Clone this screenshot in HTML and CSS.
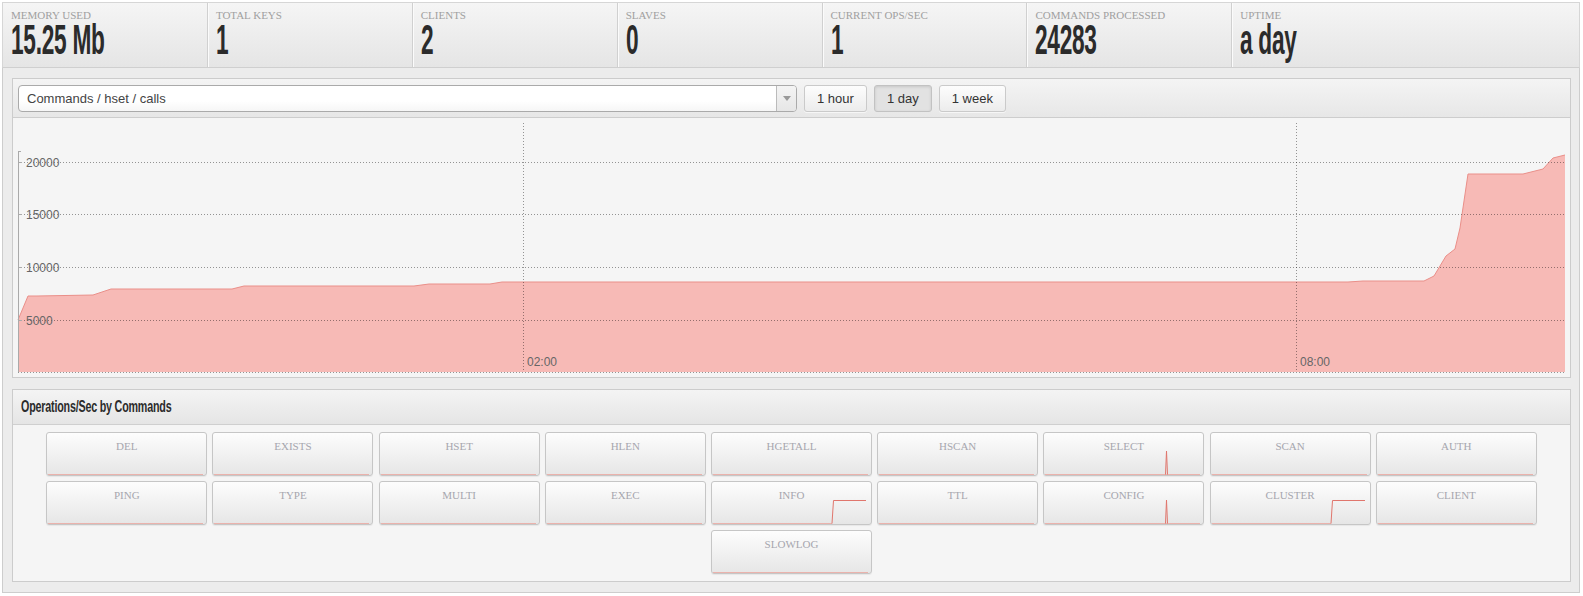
FILE: index.html
```html
<!DOCTYPE html>
<html>
<head>
<meta charset="utf-8">
<link rel="stylesheet" href="styles.css">
</head>
<body>
<div class="page">
  <div class="stats">
    <div class="stat"><div class="stat-label">MEMORY USED</div><div class="stat-value"><span>15.25 Mb</span></div></div>
    <div class="stat"><div class="stat-label">TOTAL KEYS</div><div class="stat-value"><span>1</span></div></div>
    <div class="stat"><div class="stat-label">CLIENTS</div><div class="stat-value"><span>2</span></div></div>
    <div class="stat"><div class="stat-label">SLAVES</div><div class="stat-value"><span>0</span></div></div>
    <div class="stat"><div class="stat-label">CURRENT OPS/SEC</div><div class="stat-value"><span>1</span></div></div>
    <div class="stat"><div class="stat-label">COMMANDS PROCESSED</div><div class="stat-value"><span>24283</span></div></div>
    <div class="stat stat-last"><div class="stat-label">UPTIME</div><div class="stat-value"><span>a day</span></div></div>
  </div>

  <div class="main">
    <div class="panel chart-panel">
      <div class="chart-head">
        <div class="select">
          <span class="select-text">Commands / hset / calls</span>
          <span class="select-arrow"><svg width="8" height="5" viewBox="0 0 8 5"><path d="M0 0 L8 0 L4 5 Z" fill="#999"/></svg></span>
        </div>
        <button class="range">1 hour</button>
        <button class="range active">1 day</button>
        <button class="range">1 week</button>
      </div>
      <div class="chart">
        <svg width="1557" height="259" viewBox="13 118 1557 259">
          <path d="M18,372 L18,320 L28,296 L37,296 L93,295 L111,289 L232,289 L244,286 L414,286 L429,284 L490,284 L502,282 L1348,282 L1363,281 L1424,281 L1434,276 L1446,256 L1455,249 L1460,228 L1468,174 L1523,174 L1543,169 L1553,158 L1565,155 L1565,372 Z" fill="#f7bab6"/>
          <path d="M18,320 L28,296 L37,296 L93,295 L111,289 L232,289 L244,286 L414,286 L429,284 L490,284 L502,282 L1348,282 L1363,281 L1424,281 L1434,276 L1446,256 L1455,249 L1460,228 L1468,174 L1523,174 L1543,169 L1553,158 L1565,155" fill="none" stroke="#ea8f89" stroke-width="1"/>
          <g stroke="rgba(0,0,0,0.4)" stroke-width="1" stroke-dasharray="1,2" fill="none">
            <line x1="18" y1="162.5" x2="1565" y2="162.5"/>
            <line x1="18" y1="214.5" x2="1565" y2="214.5"/>
            <line x1="18" y1="267.5" x2="1565" y2="267.5"/>
            <line x1="18" y1="320.5" x2="1565" y2="320.5"/>
            <line x1="18" y1="372.5" x2="1565" y2="372.5"/>
            <line x1="523.5" y1="123" x2="523.5" y2="372"/>
            <line x1="1296.5" y1="123" x2="1296.5" y2="372"/>
          </g>
          <g stroke="#aaa" stroke-width="1" fill="none">
            <line x1="18.5" y1="151" x2="18.5" y2="372"/>
            <line x1="18" y1="151.5" x2="21" y2="151.5"/>
            <line x1="18" y1="162.5" x2="22" y2="162.5"/>
            <line x1="18" y1="214.5" x2="22" y2="214.5"/>
            <line x1="18" y1="267.5" x2="22" y2="267.5"/>
            <line x1="18" y1="320.5" x2="22" y2="320.5"/>
          </g>
          <g class="axis-text">
            <text x="26" y="166.5">20000</text>
            <text x="26" y="218.5">15000</text>
            <text x="26" y="271.5">10000</text>
            <text x="26" y="324.5">5000</text>
            <text x="527" y="366">02:00</text>
            <text x="1300" y="366">08:00</text>
          </g>
        </svg>
      </div>
    </div>

    <div class="panel ops-panel">
      <div class="ops-head"><span>Operations/Sec by Commands</span></div>
      <div class="ops-grid">
        <div class="cmd"><span class="cmd-name">DEL</span><svg class="spark" width="155" height="25" viewBox="0 0 155 25"><line class="base" x1="0" y1="24.5" x2="155" y2="24.5"/></svg></div>
        <div class="cmd"><span class="cmd-name">EXISTS</span><svg class="spark" width="155" height="25" viewBox="0 0 155 25"><line class="base" x1="0" y1="24.5" x2="155" y2="24.5"/></svg></div>
        <div class="cmd"><span class="cmd-name">HSET</span><svg class="spark" width="155" height="25" viewBox="0 0 155 25"><line class="base" x1="0" y1="24.5" x2="155" y2="24.5"/></svg></div>
        <div class="cmd"><span class="cmd-name">HLEN</span><svg class="spark" width="155" height="25" viewBox="0 0 155 25"><line class="base" x1="0" y1="24.5" x2="155" y2="24.5"/></svg></div>
        <div class="cmd"><span class="cmd-name">HGETALL</span><svg class="spark" width="155" height="25" viewBox="0 0 155 25"><line class="base" x1="0" y1="24.5" x2="155" y2="24.5"/></svg></div>
        <div class="cmd"><span class="cmd-name">HSCAN</span><svg class="spark" width="155" height="25" viewBox="0 0 155 25"><line class="base" x1="0" y1="24.5" x2="155" y2="24.5"/></svg></div>
        <div class="cmd"><span class="cmd-name">SELECT</span><svg class="spark" width="155" height="25" viewBox="0 0 155 25"><line class="base" x1="0" y1="24.5" x2="155" y2="24.5"/><polyline points="120.5,24.5 121.5,1 122.5,24.5"/></svg></div>
        <div class="cmd"><span class="cmd-name">SCAN</span><svg class="spark" width="155" height="25" viewBox="0 0 155 25"><line class="base" x1="0" y1="24.5" x2="155" y2="24.5"/></svg></div>
        <div class="cmd"><span class="cmd-name">AUTH</span><svg class="spark" width="155" height="25" viewBox="0 0 155 25"><line class="base" x1="0" y1="24.5" x2="155" y2="24.5"/></svg></div>
        <div class="cmd"><span class="cmd-name">PING</span><svg class="spark" width="155" height="25" viewBox="0 0 155 25"><line class="base" x1="0" y1="24.5" x2="155" y2="24.5"/></svg></div>
        <div class="cmd"><span class="cmd-name">TYPE</span><svg class="spark" width="155" height="25" viewBox="0 0 155 25"><line class="base" x1="0" y1="24.5" x2="155" y2="24.5"/></svg></div>
        <div class="cmd"><span class="cmd-name">MULTI</span><svg class="spark" width="155" height="25" viewBox="0 0 155 25"><line class="base" x1="0" y1="24.5" x2="155" y2="24.5"/></svg></div>
        <div class="cmd"><span class="cmd-name">EXEC</span><svg class="spark" width="155" height="25" viewBox="0 0 155 25"><line class="base" x1="0" y1="24.5" x2="155" y2="24.5"/></svg></div>
        <div class="cmd"><span class="cmd-name">INFO</span><svg class="spark" width="155" height="25" viewBox="0 0 155 25"><line class="base" x1="0" y1="24.5" x2="119" y2="24.5"/><polyline points="119,24.5 120.5,1.5 153,1.5"/></svg></div>
        <div class="cmd"><span class="cmd-name">TTL</span><svg class="spark" width="155" height="25" viewBox="0 0 155 25"><line class="base" x1="0" y1="24.5" x2="155" y2="24.5"/></svg></div>
        <div class="cmd"><span class="cmd-name">CONFIG</span><svg class="spark" width="155" height="25" viewBox="0 0 155 25"><line class="base" x1="0" y1="24.5" x2="155" y2="24.5"/><polyline points="120.5,24.5 121.5,1 122.5,24.5"/></svg></div>
        <div class="cmd"><span class="cmd-name">CLUSTER</span><svg class="spark" width="155" height="25" viewBox="0 0 155 25"><line class="base" x1="0" y1="24.5" x2="119" y2="24.5"/><polyline points="119,24.5 120.5,1.5 153,1.5"/></svg></div>
        <div class="cmd"><span class="cmd-name">CLIENT</span><svg class="spark" width="155" height="25" viewBox="0 0 155 25"><line class="base" x1="0" y1="24.5" x2="155" y2="24.5"/></svg></div>
        <div class="cmd"><span class="cmd-name">SLOWLOG</span><svg class="spark" width="155" height="25" viewBox="0 0 155 25"><line class="base" x1="0" y1="24.5" x2="155" y2="24.5"/></svg></div>
      </div>
    </div>
  </div>
</div>
</body>
</html>
```

FILE: styles.css
```css
* { box-sizing: border-box; }
html, body { margin: 0; padding: 0; background: #fff; }
body { font-family: "Liberation Sans", Arial, sans-serif; }

.page { padding: 2px 3px 0 2px; }

/* stats */
.stats {
  display: flex;
  height: 66px;
  border: 1px solid #d6d6d6;
  border-bottom: 1px solid #cfcfcf;
  background: linear-gradient(#f5f5f5, #e5e5e5);
}
.stat {
  width: 13%;
  padding: 6px 0 0 8px;
  border-right: 1px solid #d0d0d0;
  box-shadow: inset 1px 0 0 #fbfbfb;
  overflow: hidden;
}
.stat:first-child { box-shadow: none; }
.stat-last { flex: 1; border-right: none; }
.stat-label {
  font-family: "Liberation Serif", "Times New Roman", serif;
  font-size: 11px;
  line-height: 13px;
  color: #a0a0a0;
  white-space: nowrap;
}
.stat-value {
  height: 36px;
  line-height: 36px;
  white-space: nowrap;
}
.stat-value span {
  display: inline-block;
  font-family: "Liberation Sans", Arial, sans-serif;
  font-weight: bold;
  font-size: 42px;
  color: #2b2b2b;
  transform: scaleX(0.54);
  transform-origin: 0 0;
  letter-spacing: -0.5px;
}

/* main */
.main {
  background: #ececec;
  border: 1px solid #cdcdcd;
  border-top: none;
  padding: 10px 8px 10px 9px;
}
.panel {
  border: 1px solid #cccccc;
  background: #f5f5f5;
}
.chart-head {
  display: flex;
  align-items: center;
  height: 39px;
  padding: 0 6px 0 5px;
  border-bottom: 1px solid #cdcdcd;
  background: linear-gradient(#f4f4f4, #e7e7e7);
}
.select {
  display: flex;
  width: 779px;
  height: 27px;
  border: 1px solid #aaa;
  border-radius: 4px;
  background: linear-gradient(#fff 60%, #f6f6f6);
  overflow: hidden;
}
.select-text {
  flex: 1;
  padding-left: 8px;
  font-size: 13px;
  line-height: 25px;
  color: #444;
}
.select-arrow {
  width: 20px;
  display: flex;
  align-items: center;
  justify-content: center;
  border-left: 1px solid #bbb;
  background: linear-gradient(#f4f4f4, #e6e6e6);
}
.range {
  height: 27px;
  margin-left: 7px;
  padding: 0 12px;
  border: 1px solid #cacaca;
  border-radius: 3px;
  background: linear-gradient(#fdfdfd, #ececec);
  font-family: "Liberation Sans", Arial, sans-serif;
  font-size: 13px;
  color: #333;
  box-shadow: 0 1px 0 rgba(255,255,255,0.6);
}
.range.active {
  background: #e2e2e2;
  border-color: #c2c2c2;
  box-shadow: inset 0 1px 3px rgba(0,0,0,0.12);
}
.chart { height: 259px; }
.chart svg { display: block; }
.axis-text text {
  font-family: "Liberation Sans", Arial, sans-serif;
  font-size: 12px;
  fill: #666;
}

/* ops */
.ops-panel { margin-top: 11px; }
.ops-head {
  height: 35px;
  padding: 0 0 0 8px;
  border-bottom: 1px solid #cfcfcf;
  background: linear-gradient(#f4f4f4, #e5e5e5);
  line-height: 34px;
  overflow: hidden;
}
.ops-head span {
  display: inline-block;
  font-family: "Liberation Sans", Arial, sans-serif;
  font-weight: bold;
  font-size: 17px;
  color: #2b2b2b;
  letter-spacing: -0.3px;
  transform: scaleX(0.63);
  transform-origin: 0 50%;
  white-space: nowrap;
}
.ops-grid {
  display: flex;
  flex-wrap: wrap;
  justify-content: center;
  gap: 5px 5.2px;
  padding: 7px 0 7px 0;
}
.cmd {
  position: relative;
  width: 161px;
  height: 44px;
  border: 1px solid #c6c6c6;
  border-radius: 3px;
  background: linear-gradient(#fdfdfd, #e6e6e6);
  box-shadow: 0 1px 1px rgba(0,0,0,0.06);
  text-align: center;
  padding-top: 3px;
}
.cmd-name {
  font-family: "Liberation Serif", "Times New Roman", serif;
  font-size: 11px;
  line-height: 13px;
  color: #a6a6ae;
}
.spark {
  position: absolute;
  left: 1px;
  bottom: 0;
  display: block;
}
.spark polyline {
  fill: none;
  stroke: #e0766d;
  stroke-width: 1;
}
.spark .base {
  stroke: #eab2ac;
  stroke-width: 1;
}
```
